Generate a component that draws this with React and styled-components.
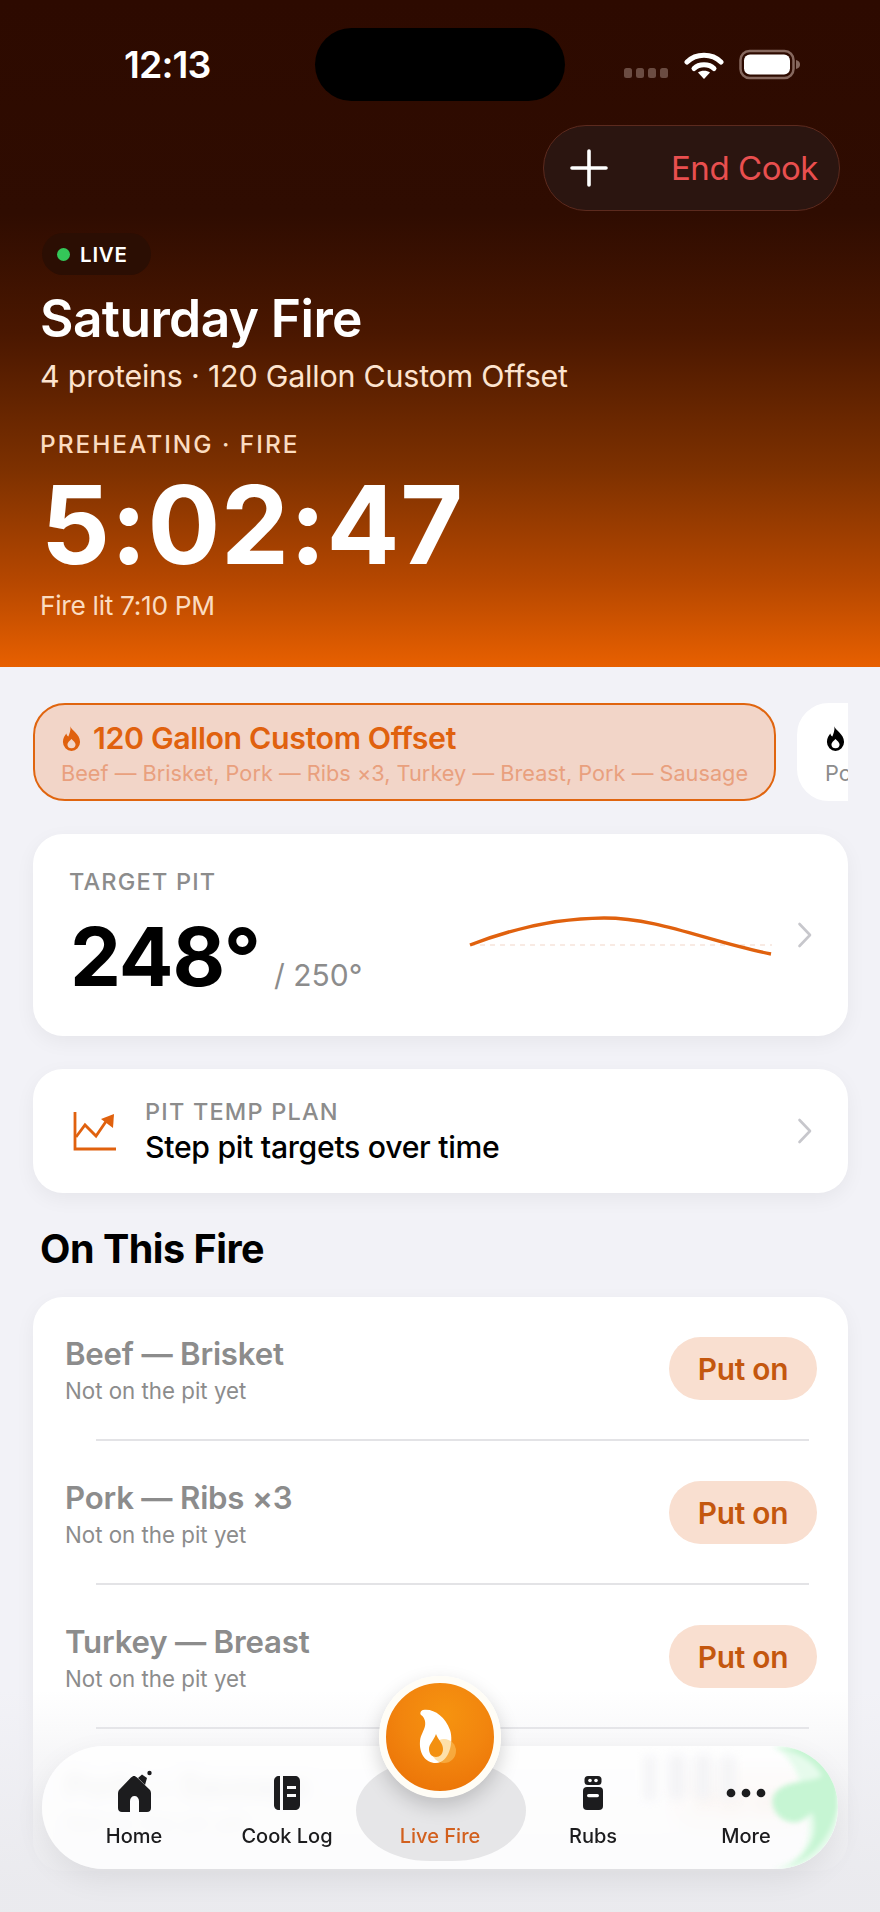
import React from "react";
import styled, { createGlobalStyle } from "styled-components";

const Global = createGlobalStyle`
  html, body { margin: 0; padding: 0; background: #f2f2f7; }
  * { box-sizing: border-box; }
`;

const Page = styled.div`
  position: relative;
  width: 880px;
  height: 1912px;
  overflow: hidden;
  background: #f2f2f7;
  font-family: Inter, "Liberation Sans", sans-serif;
`;

const Hero = styled.header`
  height: 667px;
  padding-top: 28px;
  background: linear-gradient(180deg, #2d0a00 0%, #2f0c01 32%, #4a1700 50%, #7c3000 70%, #b54700 87%, #e86000 100%);
  color: #fff;
`;

const StatusBar = styled.div`
  display: grid;
  grid-template-columns: 1fr 250px 1fr;
  height: 73px;
  align-items: center;
`;

const Time = styled.div`
  padding-left: 124px;
  font-size: 37.5px;
  font-weight: 600;
  letter-spacing: -0.9px;
`;

const Island = styled.div`
  height: 73px;
  border-radius: 37px;
  background: #000;
`;

const StatusIcons = styled.div`
  display: flex;
  align-items: center;
  padding-left: 59px;
`;

const EndRow = styled.div`
  display: flex;
  justify-content: flex-end;
  margin-top: 24px;
  padding-right: 40px;
`;

const EndButton = styled.div`
  width: 297px;
  height: 86px;
  display: flex;
  align-items: center;
  justify-content: space-between;
  padding: 0 21px 0 26px;
  border-radius: 43px;
  background: #2b1510;
  border: 1.5px solid #5c2a1e;
  color: #e94f4f;
  font-size: 33px;
  font-weight: 400;
  letter-spacing: -0.45px;
`;

const HeroBody = styled.div`
  padding-left: 40px;
`;

const LiveBadge = styled.div`
  display: inline-flex;
  align-items: center;
  gap: 10px;
  width: 109px;
  height: 42px;
  margin: 22px 0 0 2px;
  padding-left: 15px;
  border-radius: 21px;
  background: #2b0e03;
  font-size: 20.5px;
  font-weight: 600;
  letter-spacing: 0.8px;
`;

const LiveDot = styled.span`
  width: 13px;
  height: 13px;
  border-radius: 50%;
  background: #34c759;
`;

const HeroTitle = styled.h1`
  margin: 15px 0 0;
  font-size: 51.5px;
  line-height: 56px;
  font-weight: 600;
  letter-spacing: -0.6px;
`;

const HeroSub = styled.div`
  margin-top: 12px;
  font-size: 30.4px;
  line-height: 36px;
  color: #fde4cf;
  letter-spacing: -0.2px;
`;

const Eyebrow = styled.div`
  margin-top: 35px;
  font-size: 24.4px;
  line-height: 30px;
  font-weight: 500;
  letter-spacing: 2px;
  color: #fbdcc0;
`;

const Timer = styled.div`
  margin: 8px 0 0 1px;
  font-size: 108px;
  line-height: 116px;
  font-weight: 700;
  letter-spacing: 0.7px;
`;

const FireLit = styled.div`
  margin-top: 7px;
  font-size: 26.3px;
  line-height: 32px;
  color: #fbdcc0;
  letter-spacing: -0.3px;
`;

const Content = styled.main`
  padding: 36px 32px 0 33px;
`;

const Selector = styled.div`
  display: flex;
  gap: 21px;
  overflow: hidden;
`;

const FireTab = styled.div`
  flex: 0 0 ${(p) => (p.$active ? "743px" : "200px")};
  height: 98px;
  padding: 15px 0 0 26px;
  border-radius: 32px;
  background: ${(p) => (p.$active ? "#f2d5c8" : "#fff")};
  border: 2px solid ${(p) => (p.$active ? "#e0650f" : "#fff")};
`;

const TabTitle = styled.div`
  display: flex;
  align-items: center;
  gap: 8px;
  margin-left: -3px;
  font-size: 30.3px;
  line-height: 36px;
  font-weight: 600;
  letter-spacing: -0.35px;
  color: ${(p) => (p.$active ? "#e0610e" : "#000")};
  white-space: nowrap;
`;

const TabSub = styled.div`
  margin-top: 2px;
  font-size: 21.7px;
  line-height: 30px;
  white-space: nowrap;
  color: ${(p) => (p.$active ? "#e9a07e" : "#8c8c8c")};
  letter-spacing: 0.02px;
`;

const Card = styled.section`
  margin-top: 33px;
  border-radius: 30px;
  background: #fff;
  box-shadow: 0 6px 20px rgba(0, 0, 0, 0.05);
`;

const TargetCard = styled(Card)`
  height: 202px;
  display: flex;
  align-items: center;
  padding: 0 35px 0 36px;
`;

const TargetInfo = styled.div`
  flex: 1;
`;

const SmallLabel = styled.div`
  font-size: 23.5px;
  line-height: 28px;
  font-weight: 500;
  letter-spacing: 1.2px;
  color: #8c8c8c;
`;

const ValueRow = styled.div`
  display: flex;
  align-items: baseline;
  gap: 14px;
  margin-top: 16px;
  padding-left: 1px;
`;

const Value = styled.div`
  font-size: 81px;
  line-height: 90px;
  font-weight: 700;
  color: #000;
  letter-spacing: -1px;
`;

const ValueOf = styled.div`
  font-size: 30px;
  color: #8c8c8c;
`;

const Chart = styled.svg`
  flex: none;
  margin: 5px 24px 0 0;
`;

const PlanCard = styled(Card)`
  height: 124px;
  display: flex;
  align-items: center;
  gap: 28px;
  padding: 0 35px 0 40px;
`;

const PlanText = styled.div`
  flex: 1;
`;

const PlanTitle = styled.div`
  margin-top: 3px;
  font-size: 30.2px;
  line-height: 36px;
  font-weight: 500;
  letter-spacing: -0.3px;
  color: #000;
`;

const Heading = styled.h2`
  margin: 34px 0 0 7px;
  font-size: 39.5px;
  line-height: 44px;
  font-weight: 650;
  letter-spacing: -0.5px;
  color: #000;
`;

const ListCard = styled(Card)`
  margin-top: 26px;
`;

const Row = styled.div`
  height: 142px;
  display: flex;
  align-items: center;
  justify-content: space-between;
  padding: 0 31px 0 32px;
`;

const RowInfo = styled.div`
  padding-top: 3px;
`;

const Separator = styled.div`
  height: 2px;
  margin: 0 39px 0 63px;
  background: #e3e3e6;
`;

const RowTitle = styled.div`
  font-size: 31.2px;
  line-height: 38px;
  font-weight: 600;
  letter-spacing: -0.2px;
  color: #8c8c8c;
`;

const RowSub = styled.div`
  margin-top: 4px;
  font-size: 22.3px;
  line-height: 28px;
  color: #8c8c8c;
`;

const PutOn = styled.div`
  width: 148px;
  height: 63px;
  display: flex;
  align-items: center;
  justify-content: center;
  padding-top: 2px;
  border-radius: 32px;
  background: #f9dfd0;
  color: #c4570e;
  font-size: 29.8px;
  font-weight: 600;
  letter-spacing: -0.2px;
`;

const BottomFade = styled.div`
  position: absolute;
  left: 0;
  right: 0;
  bottom: 0;
  height: 222px;
  background: linear-gradient(180deg, rgba(236, 236, 240, 0) 0%, rgba(236, 236, 240, 0.45) 30%, rgba(234, 234, 238, 0.97) 88%);
  pointer-events: none;
`;

const Nav = styled.nav`
  position: absolute;
  left: 42px;
  top: 1746px;
  width: 796px;
  height: 123px;
  display: grid;
  grid-template-columns: repeat(5, 153px);
  padding: 28px 0 0 15.5px;
  border-radius: 62px;
  background: rgba(255, 255, 255, 0.82);
  backdrop-filter: blur(7px);
  box-shadow: 0 10px 30px rgba(0, 0, 0, 0.07);
`;

const GlowClip = styled.div`
  position: absolute;
  inset: 0;
  overflow: hidden;
  border-radius: 62px;
  pointer-events: none;
`;

const Glow = styled.svg`
  position: absolute;
  right: 0;
  top: 0;
  filter: blur(2.5px);
`;

const Smear = styled.svg`
  position: absolute;
  left: 598px;
  top: 4px;
  filter: blur(5px);
`;

const NavItem = styled.div`
  position: relative;
  display: flex;
  flex-direction: column;
  align-items: center;
  gap: 12px;
  color: ${(p) => (p.$active ? "#d2601e" : "#1c1c1e")};
  font-size: 20px;
  font-weight: 500;
  line-height: 24px;
  ${(p) =>
    p.$active &&
    `&::before {
      content: "";
      position: absolute;
      left: -8px;
      right: -9px;
      top: -14px;
      height: 101px;
      border-radius: 85px / 58px;
      background: #e6e6e8;
    }`}
`;

const IconBox = styled.div`
  position: relative;
  width: 40px;
  height: 38px;
  display: flex;
  align-items: center;
  justify-content: center;
`;

const NavLabel = styled.span`
  position: relative;
`;

const Fab = styled.div`
  position: absolute;
  left: 337px;
  top: -70px;
  width: 122px;
  height: 122px;
  display: flex;
  align-items: center;
  justify-content: center;
  border-radius: 50%;
  border: 7px solid #fffdf6;
  background: radial-gradient(circle at 55% 30%, #f6930f 0%, #f2850e 45%, #e96d05 100%);
  box-shadow: 0 8px 20px rgba(0, 0, 0, 0.18);
`;

const Flame = ({ size = 24, color = "currentColor" }) => (
  <svg width={size} height={size} viewBox="0 0 24 24" style={{ flex: "none" }}>
    <path
      fill={color}
      fillRule="evenodd"
      d="M11 1c.6 3.7 8.6 6.5 8.6 14a7.6 8 0 0 1-15.2 0c0-3.4 1.6-5.6 3-7.5.3 1.4.9 2.3 1.8 2.7C10 8 11.6 4.8 11 1ZM12 12.4c-1.9 1.9-3.6 3.2-3.6 5a3.6 3.3 0 0 0 7.2 0c0-1.8-1.8-3.1-3.6-5Z"
    />
  </svg>
);

const Chevron = () => (
  <svg width="16" height="26" viewBox="0 0 16 26" style={{ flex: "none" }}>
    <path d="M2.5 2 L13 13 L2.5 24" fill="none" stroke="#c7c7cc" strokeWidth="2.6" strokeLinecap="round" strokeLinejoin="round" />
  </svg>
);

const Wifi = () => (
  <svg width="40" height="30" viewBox="0 0 40 30">
    <path d="M3 12 C12 3 28 3 37 12" fill="none" stroke="#fff" strokeWidth="5" strokeLinecap="round" />
    <path d="M10 18.5 C15 13.5 25 13.5 30 18.5" fill="none" stroke="#fff" strokeWidth="5" strokeLinecap="round" />
    <path d="M14 22.5 C17 20 23 20 26 22.5 L20 29 Z" fill="#fff" />
  </svg>
);

const Signal = () => (
  <svg width="44" height="30" viewBox="0 0 44 30" style={{ marginRight: 16 }}>
    {[0, 12, 24, 36].map((x) => (
      <rect key={x} x={x} y="18" width="8" height="10" rx="2.5" fill="#6b4c42" />
    ))}
  </svg>
);

const Battery = () => (
  <svg width="62" height="32" viewBox="0 0 62 32" style={{ marginLeft: 15 }}>
    <rect x="1.5" y="2" width="53" height="27" rx="9" fill="none" stroke="#86685e" strokeWidth="2.5" />
    <rect x="5" y="5.5" width="46" height="20" rx="6" fill="#fff" />
    <path d="M57 11 C60 11.5 61 13.5 61 15.5 C61 17.5 60 19.5 57 20 Z" fill="#86685e" />
  </svg>
);

const Plus = () => (
  <svg width="38" height="38" viewBox="0 0 38 38">
    <path d="M19 2 V36 M2 19 H36" stroke="#fff" strokeWidth="3.6" strokeLinecap="round" />
  </svg>
);

const Spark = () => (
  <Chart width="304" height="44" viewBox="0 0 304 44">
    <path d="M1 29 H303" stroke="#f6e3da" strokeWidth="1.6" strokeDasharray="5 5" fill="none" />
    <path d="M1 29 C45 12 90 2 135 2 C190 2 240 26 302 38" stroke="#e0610e" strokeWidth="3.4" fill="none" />
  </Chart>
);

const PlanIcon = () => (
  <svg width="44" height="40" viewBox="0 0 44 40" style={{ flex: "none" }}>
    <path d="M2 1 V38 H43" fill="none" stroke="#e0610e" strokeWidth="2.8" />
    <path d="M3 26 L12 14 L23 25 L34 9" fill="none" stroke="#e0610e" strokeWidth="2.8" />
    <path d="M28 8 L41 3 L40 17 Z" fill="#e0610e" />
  </svg>
);

const HomeIcon = () => (
  <svg width="40" height="38" viewBox="0 0 40 38" style={{ overflow: "visible" }}>
    <path
      fill="#1c1c1e"
      d="M20 2 C21 2 22 2.6 23 3.5 L35.5 15.5 C36.5 16.5 37 18 37 19.5 V34 C37 36.5 35.5 38 33 38 H25 V27 C25 24 23 22 20.5 22 C18 22 16 24 16 27 V38 H8 C5.5 38 4 36.5 4 34 V19.5 C4 18 4.5 16.5 5.5 15.5 L17 3.5 C18 2.6 19 2 20 2 Z"
    />
    <path fill="#1c1c1e" d="M24 4 L28 0.5 L33 4 L31 11 Z" />
    <circle cx="35.5" cy="-1" r="2.2" fill="#1c1c1e" />
  </svg>
);

const LogIcon = () => (
  <svg width="28" height="36" viewBox="0 0 28 36">
    <path fill="#1c1c1e" d="M6 1 H7 V35 H6 C3 35 1 33 1 30 V6 C1 3 3 1 6 1 Z" />
    <path fillRule="evenodd" fill="#1c1c1e" d="M10 1 H22 C25 1 27 3 27 6 V30 C27 33 25 35 22 35 H10 Z M14 11 H23 V14 H14 Z M14 19 H23 V22 H14 Z" />
  </svg>
);

const RubsIcon = () => (
  <svg width="22" height="36" viewBox="0 0 22 36">
    <rect x="2.5" y="1" width="17" height="9" rx="3.5" fill="#1c1c1e" />
    <circle cx="8" cy="5.5" r="1.8" fill="#fff" />
    <circle cx="14" cy="5.5" r="1.8" fill="#fff" />
    <rect x="1" y="12" width="20" height="23" rx="4" fill="#1c1c1e" />
    <rect x="5" y="19" width="12" height="3.2" rx="1.6" fill="#fff" />
  </svg>
);

const MoreIcon = () => (
  <svg width="44" height="12" viewBox="0 0 44 12">
    <circle cx="5.5" cy="6" r="4.8" fill="#1c1c1e" />
    <circle cx="22" cy="6" r="4.8" fill="#1c1c1e" />
    <circle cx="38.5" cy="6" r="4.8" fill="#1c1c1e" />
  </svg>
);

const FabFlame = () => (
  <svg width="44" height="58" viewBox="0 0 44 58">
    <path fill="#fff" d="M5 2 C15 0 27 8 32 22 C36 34 31 55 18 55 C7 55 1 45 2 33 C2.5 27 6 23 7 18 C8 13 6 9 3 7 C1.5 5 3 2.5 5 2 Z" />
    <circle cx="26" cy="43" r="12" fill="#fcc765" opacity="0.55" />
    <path fill="#f39010" d="M18 26 C20 32 25 35 25 41 C25 46 22 49 18 49 C14 49 11 46 11 41 C11 36 15.5 33 18 26 Z" />
  </svg>
);

const rows = ["Beef — Brisket", "Pork — Ribs ×3", "Turkey — Breast", "Pork — Sausage"];

const tabs = [
  { label: "Home", icon: <HomeIcon /> },
  { label: "Cook Log", icon: <LogIcon /> },
  { label: "Live Fire", icon: null, active: true },
  { label: "Rubs", icon: <RubsIcon /> },
  { label: "More", icon: <MoreIcon /> },
];

export default function App() {
  return (
    <Page>
      <Global />
      <Hero>
        <StatusBar>
          <Time>12:13</Time>
          <Island />
          <StatusIcons>
            <Signal />
            <Wifi />
            <Battery />
          </StatusIcons>
        </StatusBar>
        <EndRow>
          <EndButton>
            <Plus />
            <span>End Cook</span>
          </EndButton>
        </EndRow>
        <HeroBody>
          <LiveBadge>
            <LiveDot />
            LIVE
          </LiveBadge>
          <HeroTitle>Saturday Fire</HeroTitle>
          <HeroSub>4 proteins · 120 Gallon Custom Offset</HeroSub>
          <Eyebrow>PREHEATING · FIRE</Eyebrow>
          <Timer>5:02:47</Timer>
          <FireLit>Fire lit 7:10 PM</FireLit>
        </HeroBody>
      </Hero>
      <Content>
        <Selector>
          <FireTab $active>
            <TabTitle $active>
              <Flame size={27} />
              120 Gallon Custom Offset
            </TabTitle>
            <TabSub $active>Beef — Brisket, Pork — Ribs ×3, Turkey — Breast, Pork — Sausage</TabSub>
          </FireTab>
          <FireTab>
            <TabTitle>
              <Flame size={27} />
              Pork
            </TabTitle>
            <TabSub>Pork — Ribs</TabSub>
          </FireTab>
        </Selector>
        <TargetCard>
          <TargetInfo>
            <SmallLabel>TARGET PIT</SmallLabel>
            <ValueRow>
              <Value>248°</Value>
              <ValueOf>/ 250°</ValueOf>
            </ValueRow>
          </TargetInfo>
          <Spark />
          <Chevron />
        </TargetCard>
        <PlanCard>
          <PlanIcon />
          <PlanText>
            <SmallLabel>PIT TEMP PLAN</SmallLabel>
            <PlanTitle>Step pit targets over time</PlanTitle>
          </PlanText>
          <Chevron />
        </PlanCard>
        <Heading>On This Fire</Heading>
        <ListCard>
          {rows.map((name, i) => (
            <React.Fragment key={name}>
              {i > 0 && <Separator />}
              <Row>
                <RowInfo>
                  <RowTitle>{name}</RowTitle>
                  <RowSub>Not on the pit yet</RowSub>
                </RowInfo>
                <PutOn>Put on</PutOn>
              </Row>
            </React.Fragment>
          ))}
        </ListCard>
      </Content>
      <BottomFade />
      <Nav>
        <GlowClip>
          <Smear width="104" height="56" viewBox="0 0 104 56">
            <g fill="#f4f4f6">
              <rect x="4" y="6" width="12" height="44" />
              <rect x="28" y="4" width="18" height="46" rx="8" />
              <rect x="54" y="4" width="18" height="46" rx="8" />
              <rect x="80" y="6" width="16" height="44" rx="6" />
            </g>
          </Smear>
          <Glow width="70" height="123" viewBox="0 0 70 123">
            <path fill="#e6fbec" d="M4 0 H70 V123 H4 C30 118 44 100 40 74 L30 30 C24 16 16 6 4 0 Z" />
            <path fill="#c6f5d3" d="M6 2 C26 4 46 14 54 30 C44 36 30 34 16 40 C6 45 3 52 5 60 C8 72 20 78 30 76 C36 74 40 70 44 66 C50 80 48 104 20 120 C44 112 62 94 70 62 V0 Z" />
          </Glow>
        </GlowClip>
        {tabs.map((t) => (
          <NavItem key={t.label} $active={t.active}>
            <IconBox>{t.icon}</IconBox>
            <NavLabel>{t.label}</NavLabel>
          </NavItem>
        ))}
        <Fab>
          <FabFlame />
        </Fab>
      </Nav>
    </Page>
  );
}
